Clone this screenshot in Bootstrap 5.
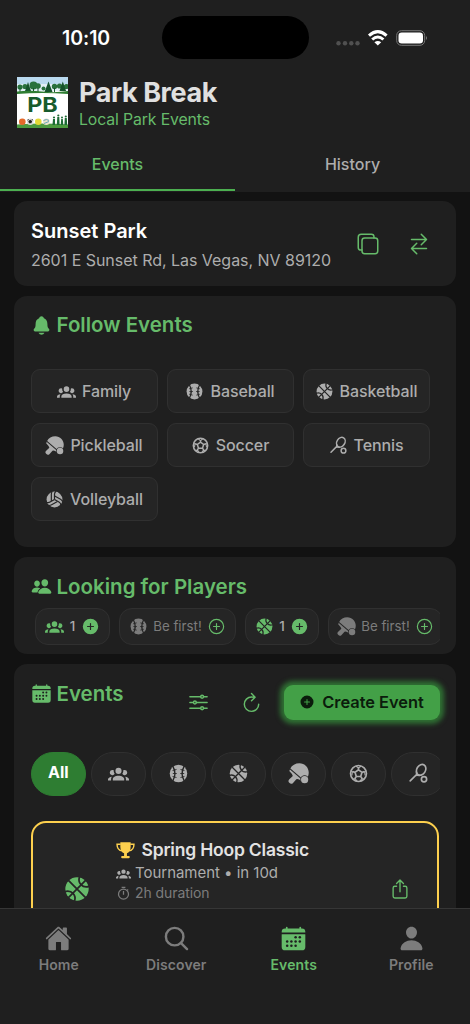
<!DOCTYPE html>
<html lang="en" data-bs-theme="dark">
<head>
<meta charset="utf-8">
<meta name="viewport" content="width=device-width, initial-scale=1">
<title>Park Break</title>
<link href="https://cdn.jsdelivr.net/npm/bootstrap@5.3.0/dist/css/bootstrap.min.css" rel="stylesheet">
<style>
:root{--surface:#1f1f1f;--chip:#252525;--line:#303030;--green:#66bb6a;--muted:#adadad;--dim:#7c7c7c}
body{background:#121212;font-family:Inter,"Liberation Sans",sans-serif;color:#e2e2e2;height:1024px;overflow:hidden;line-height:1}
svg{display:block;flex:none;fill:currentColor}
.ln{fill:none;stroke:currentColor;stroke-width:32;stroke-linecap:round;stroke-linejoin:round}
.phone{height:1024px}
.tone-green{color:var(--green)}
.tone-muted{color:var(--muted)}
.tone-dim{color:var(--dim)}
.top-area{background:var(--surface);height:192px}
.status-row{height:77px;padding:16px 42px 0 62px}
.clock{font-size:19.5px;font-weight:600;color:#fff;width:99.5px;line-height:44px;letter-spacing:-.05px}
.island{width:147px;height:43px;border-radius:22px;background:#000}
.brand-row{height:52px;padding-left:17px;gap:11px}
.brand-name{font-size:27px;font-weight:700;line-height:31px;letter-spacing:-.43px;color:#e0e0e0;margin:0}
.brand-sub{font-size:15.8px;line-height:20px;margin-top:2px;letter-spacing:-.12px}
.tab-row .nav-link{height:62px;border-radius:0;color:var(--muted);font-size:16px;font-weight:500;padding:26px 0 0;line-height:18px;border-bottom:2.5px solid transparent}
.tab-row .nav-link.active{color:var(--green);background:none;border-bottom-color:#4caf50}
.scroller{padding:9px 14px 0;gap:10px}
.panel{background:var(--surface);border-radius:13px;padding:0 16.5px}
.place{height:85px;padding-right:25.5px;padding-left:17px}
.place-name{font-size:20px;font-weight:600;line-height:24px;margin:1px 0 0}
.place-addr{font-size:16px;line-height:20px;margin-top:7px;white-space:nowrap;letter-spacing:-.03px}
.sec-title{font-size:20.5px;font-weight:600;line-height:24px;color:var(--green);gap:5px;margin:0}
.follow{height:251px;padding-top:17px}
.follow-grid{display:grid;grid-template-columns:repeat(3,127px);gap:10px 9px;margin-top:32px}
.pick{height:44px;background:var(--chip);border:1px solid var(--line);border-radius:9px;color:var(--muted);font-size:16px;font-weight:500;gap:6px;letter-spacing:-.1px;padding:0;line-height:20px}
.looking{height:97px;padding-top:17.5px}
.clip{overflow:hidden;width:409.5px}
.seek{height:37px;flex:none;border:1px solid var(--line);background:var(--chip);border-radius:13px;font-size:13.3px;gap:5.5px}
.events-panel{height:280px;padding-top:17.5px}
.new-btn{background:#43a047;color:#0b1c0c;font-weight:600;font-size:16.4px;border:0;border-radius:9px;width:156px;height:35px;padding:0;gap:7px;box-shadow:0 0 5px 4px #2f7033;margin-left:-9px}
.filter{width:55.5px;height:44px;flex:none;border-radius:22px;background:var(--chip);border:1px solid var(--line);color:var(--muted);padding-bottom:2px}
.filter.on{background:#2e7d32;border-color:#2e7d32;color:#fff;font-size:16px;font-weight:700;padding-bottom:4px}
.ev-card{width:408px;height:120px;border:2px solid #fdd04e;border-radius:15px;background:var(--chip);padding:16px 26px 0 29.5px;margin-left:.5px}
.ev-main{margin-left:25px}
.ev-name{font-size:17.5px;font-weight:600;line-height:22px;gap:7px;letter-spacing:-.2px}
.ev-meta{font-size:15px;line-height:20px;gap:4.5px;margin-top:2px;letter-spacing:-.03px}
.ev-time{font-size:14px;line-height:18px;gap:4.5px;margin-top:1px;letter-spacing:-.08px}
.bottom-bar{background:var(--surface);border-top:1px solid #363636;height:116px;z-index:2;padding-top:16px}
.bottom-bar a{color:var(--dim);text-decoration:none;font-size:14px;font-weight:600;gap:3.5px;line-height:18px;width:25%;letter-spacing:.1px}
.bottom-bar a.current{color:var(--green)}
</style>
</head>
<body>
<svg width="0" height="0" class="position-absolute">
<defs>
<mask id="m-base"><circle cx="12" cy="12" r="10" fill="#fff"/><g fill="none" stroke="#000" stroke-width="1.6"><path d="M5.500 3.500Q10.200 12 5.500 20.500M18.500 3.500Q13.800 12 18.500 20.500"/><path d="M5.200 8.600l4.500-1.200M5.500 12h4.500M5.200 15.400l4.500 1.200M18.800 8.600l-4.500-1.200M18.500 12h-4.500M18.800 15.400l-4.500 1.200" stroke-width="1"/></g></mask>
<mask id="m-bask"><circle cx="12" cy="12" r="10" fill="#fff"/><g fill="none" stroke="#000" stroke-width="1.5"><path d="M4 4l16 16M20 4L4 20M14.2 1.5C12.3 6.5 16.5 11.7 22.5 9.8M9.8 22.500C11.700 17.500 7.500 12.300 1.500 14.200"/></g></mask>
<mask id="m-volley"><circle cx="12" cy="12" r="10" fill="#fff"/><g fill="none" stroke="#000" stroke-width="1.5"><path d="M12 12V5.500Q12 3 14 1.500M8 14V5.500Q8 4 9 2"/><path d="M12 12V5.500Q12 3 14 1.500M8 14V5.500Q8 4 9 2" transform="rotate(120 12 12)"/><path d="M12 12V5.500Q12 3 14 1.500M8 14V5.500Q8 4 9 2" transform="rotate(240 12 12)"/></g></mask>
<mask id="m-pad"><path d="M0 0h24v24H0z" fill="#fff"/><path d="M2 6.500L16 18.500" stroke="#000" stroke-width="1.300"/><circle cx="19" cy="19" r="4.900" fill="#000"/></mask>
<mask id="m-cal"><path fill="#fff" d="M0 0h512v512H0z"/><g fill="#000"><circle cx="296" cy="232" r="24"/><circle cx="376" cy="232" r="24"/><circle cx="136" cy="312" r="24"/><circle cx="216" cy="312" r="24"/><circle cx="296" cy="312" r="24"/><circle cx="376" cy="312" r="24"/><circle cx="136" cy="392" r="24"/><circle cx="216" cy="392" r="24"/><circle cx="296" cy="392" r="24"/></g></mask>
</defs>
<symbol id="family" viewBox="0 0 24 24"><path d="M12 5.500A3.500 3.500 0 1 1 12 12.500A3.500 3.500 0 1 1 12 5.500M5 8C5.560 8 6.080 8.150 6.530 8.420C6.380 9.850 6.800 11.270 7.660 12.380A3 3 0 1 1 5 8M19 8A3 3 0 1 1 16.340 12.380C17.200 11.270 17.620 9.850 17.470 8.420C17.920 8.150 18.440 8 19 8M5.500 18.250C5.500 16.180 8.410 14.500 12 14.500S18.500 16.180 18.500 18.250V20H5.500zM0 20V18.500C0 17.110 1.890 15.940 4.450 15.600C3.860 16.280 3.500 17.220 3.500 18.250V20zM24 20H20.500V18.250C20.500 17.220 20.140 16.280 19.550 15.600C22.110 15.940 24 17.110 24 18.500z"/></symbol>
<symbol id="baseball" viewBox="0 0 24 24"><path mask="url(#m-base)" d="M0 0h24v24H0z"/></symbol>
<symbol id="basketball" viewBox="0 0 24 24"><path mask="url(#m-bask)" d="M0 0h24v24H0z"/></symbol>
<symbol id="volleyball" viewBox="0 0 24 24"><path mask="url(#m-volley)" d="M0 0h24v24H0z"/></symbol>
<symbol id="pickleball" viewBox="0 0 24 24"><g mask="url(#m-pad)"><path d="M2.500 6.500C4.500 2.500 8.500 .3 13 .3C19 .3 23.700 5 23.700 11C23.700 14.500 22 18 19.500 20L15 20.500Q12.500 18 9.500 18.500L5.500 23Q3.500 24.500 1.500 22.500T1.500 18.500L5.500 14.800L4.500 12.500L1.500 9z"/></g><circle cx="19" cy="19" r="4.100"/></symbol>
<symbol id="soccer" viewBox="0 0 24 24"><g fill="none" stroke="currentColor" stroke-width="1.900"><circle cx="12" cy="12" r="9.100"/><path d="M12 7.800l4 2.900-1.500 4.700h-5L8 10.700zM12 7.800V5.500M16 10.700l3-1M14.500 15.400l1.800 2.500M9.500 15.400l-1.800 2.500M8 10.700l-3-1"/><path d="M9 3.500l3 2.300 3-2.300M20.800 9l-1.800 1 .6 4.200M18 18.200l-2.500-.2-1.600 2.800M10.100 20.800L8.500 18 6 18.200M4.400 14.200L5 10l-1.800-1" stroke-width="1.300"/></g></symbol>
<symbol id="tennis" viewBox="0 0 24 24"><g fill="none" stroke="currentColor" stroke-width="1.900" stroke-linecap="round"><ellipse cx="15" cy="7.800" rx="5" ry="6.500" transform="rotate(32 15 7.800)"/><path d="M2.500 20.500L8.500 14.500Q10.300 13.800 9.800 10.500M8.500 14.500Q10 13.300 13 14.200"/><circle cx="18.300" cy="18.500" r="3"/></g></symbol>
<symbol id="calendar" viewBox="0 0 512 512"><path mask="url(#m-cal)" d="M480 128a64 64 0 00-64-64h-16V48a16 16 0 00-32 0v16H144V48a16 16 0 00-32 0v16H96a64 64 0 00-64 64v12a4 4 0 004 4h440a4 4 0 004-4zM32 416a64 64 0 0064 64h320a64 64 0 0064-64V179a3 3 0 00-3-3H35a3 3 0 00-3 3z"/></symbol>
<symbol id="bell" viewBox="0 0 512 512"><path d="M440 341.300l-4.900-5.900c-22-26.600-35.300-42.700-35.300-118 0-39-9.300-71-27.700-95-13.600-17.700-31.900-31.200-56-41.100C306.600 51.500 282.800 32 256 32s-50.600 19.500-59.300 48.600c-56.400 23.200-84.600 68.400-84.600 136.800 0 75.300-13.300 91.400-35.300 118l-4.900 5.900a35.200 35.200 0 00-4.600 37.600c6.200 13 19.300 21.100 34.300 21.100h308.900c14.900 0 28-8 34.200-21a35.200 35.200 0 00-4.600-37.700zM256 480a80 80 0 0070.400-42.100 4 4 0 00-3.500-5.900H189a4 4 0 00-3.500 5.900A80 80 0 00256 480z"/></symbol>
<symbol id="people" viewBox="0 0 512 512"><path d="M336 256c-20.600 0-40.400-9.200-56-25.800-15.100-16.300-24.400-38-26-61-1.700-24.700 5.800-47.300 21.100-63.800S312 80 336 80c23.800 0 45.400 9.100 60.700 25.500 15.500 16.600 23 39.200 21.300 63.600-1.700 23.100-10.900 44.800-26 61C376.400 246.800 356.600 256 336 256zM467.800 432H204.200a27.700 27.700 0 01-22-10.700 30.200 30.200 0 01-5.300-25.800c8.400-33.800 29.300-61.800 60.300-81C264.800 297.400 299.900 288 336 288c36.900 0 71 9 98.700 26 31.100 19.200 52 47.400 60.400 81.600a30.300 30.300 0 01-5.300 25.800 27.700 27.700 0 01-22 10.600zM147 260c-35.200 0-66.100-32.700-69-72.900-1.400-20.600 5-39.700 18-53.600 12.900-13.900 31-21.500 51-21.500s38 7.700 50.900 21.600c13.100 14 19.500 33 18 53.500-2.900 40.200-33.800 72.900-68.900 72.900zM212.700 291.500c-17.600-8.600-40.500-13-65.700-13-29.500 0-58 7.700-80.600 21.700-25.500 15.800-42.600 38.900-49.600 66.700a27.400 27.400 0 004.800 23.400A25.300 25.300 0 0041.700 400h111a8 8 0 007.900-6.600c8-35.900 28.700-64.700 58.100-85.700a8 8 0 00-.6-13.400z"/></symbol>
<symbol id="plus-full" viewBox="0 0 512 512"><path fill-rule="evenodd" d="M256 48a208 208 0 100 416 208 208 0 000-416zm80 224h-64v64a16 16 0 01-32 0v-64h-64a16 16 0 010-32h64v-64a16 16 0 0132 0v64h64a16 16 0 010 32z"/></symbol>
<symbol id="plus-ring" viewBox="0 0 512 512"><path class="ln" d="M448 256a192 192 0 10-384 0 192 192 0 10384 0zM256 176v160M336 256H176"/></symbol>
</svg>

<div class="phone d-flex flex-column">
<header class="top-area flex-shrink-0">
  <div class="status-row d-flex">
    <div class="clock">10:10</div>
    <div class="island"></div>
    <svg class="ms-auto" width="92" height="44" viewBox="0 0 92 44"><g fill="#505050"><circle cx="2.500" cy="27.300" r="2.200"/><circle cx="9" cy="27.300" r="2.200"/><circle cx="15.300" cy="27.300" r="2.200"/><circle cx="21.500" cy="27.300" r="2.200"/></g><g fill="none" stroke="#fff" stroke-width="3"><path d="M33 19.600Q41.800 11.700 50.600 19.600M36.200 23.500Q41.800 18.500 47.400 23.500"/></g><path fill="#fff" d="M38.400 26.200Q41.800 23.600 45.200 26.200L41.800 29.500z"/><rect x="60.700" y="14.700" width="28" height="14.600" rx="4.700" fill="none" stroke="#777"/><rect x="62.500" y="16.500" width="24.500" height="11" rx="3.200" fill="#fff"/><path fill="#777" d="M90 20q2 2 0 4z"/></svg>
  </div>
  <div class="brand-row d-flex">
    <svg width="51" height="51" viewBox="0 0 51 51">
      <path fill="#fff" d="M0 0h51v51H0z"/><path fill="#b9d9ef" d="M0 0h51v14H0z"/><path fill="#e3f0f7" d="M0 7h51v7H0z"/>
      <g fill="#28713d"><circle cx="3" cy="10" r="2.600"/><circle cx="8" cy="9.500" r="2.600"/><circle cx="16.500" cy="8.500" r="4"/><circle cx="21" cy="9" r="2.800"/><circle cx="26.500" cy="11.500" r="2"/><circle cx="37.500" cy="9.500" r="2.700"/><circle cx="42.500" cy="9" r="2.600"/><circle cx="49.300" cy="9.500" r="2.600"/></g>
      <g fill="#15532c"><path d="M11 5l3 9H8zM31.500 4.500l4 10.500h-8zM45.800 4.500l3.300 9.500h-6.600z"/><path d="M2.500 11h1v4h-1zM16 11h1v4h-1zM20.500 11h1v4h-1zM37 11h1v4h-1z"/></g>
      <path fill="#2e7d32" d="M0 14.500Q12 13 25 14.500T51 14V17H0z"/>
      <path fill="#fff" d="M0 17Q25 15 51 17v2H0z"/>
      <text x="25.500" y="35.200" text-anchor="middle" font-family="Inter,sans-serif" font-size="20.500" font-weight="700" fill="#175b2c" textLength="30.500" lengthAdjust="spacingAndGlyphs">PB</text>
      <path fill="#4c9a3f" d="M0 47.500Q25 45.500 51 47.500V51H0z"/>
      <circle cx="5.300" cy="44.700" r="3.300" fill="#e4692a"/><circle cx="13.200" cy="44.700" r="3.300" fill="#ddd"/><path fill="#222" d="M13.200 42.700l1.900 1.400-.7 2.200H12l-.7-2.200zM10 44l1-2 1 .3zM16.400 44l-1-2-1 .3z"/><circle cx="21.300" cy="44.700" r="3.300" fill="#e3d936"/><circle cx="29.300" cy="44.700" r="3.300" fill="#e9e4c8"/><path d="M26.500 43.500q3-2 5.600 0M27 46.500l5-2" stroke="#6ca7b8" fill="none"/>
      <g fill="#1d6b35"><path d="M36 42h2v6h-2.500zM40.300 40h2l.3 8h-2.800zM44.200 42h1.600l.5 6h-2.600zM47.800 41h2l.4 7h-2.800z"/><circle cx="37" cy="40.500" r="1.100"/><circle cx="41.300" cy="38.500" r="1.100"/><circle cx="45" cy="40.500" r="1"/><circle cx="48.800" cy="39.500" r="1.100"/></g>
    </svg>
    <div><h1 class="brand-name">Park Break</h1><div class="brand-sub tone-green">Local Park Events</div></div>
  </div>
  <ul class="tab-row nav nav-justified">
    <li class="nav-item"><a class="nav-link active" href="#">Events</a></li>
    <li class="nav-item"><a class="nav-link" href="#">History</a></li>
  </ul>
</header>

<main class="scroller d-flex flex-column flex-grow-1 overflow-hidden">
  <section class="panel place d-flex align-items-center flex-shrink-0">
    <div><h2 class="place-name">Sunset Park</h2><div class="place-addr tone-muted">2601 E Sunset Rd, Las Vegas, NV 89120</div></div>
    <div class="ms-auto d-flex tone-green" style="gap:27px">
      <svg width="24" height="24" viewBox="0 0 512 512"><g class="ln"><rect x="128" y="128" width="336" height="336" rx="57"/><path d="M383.500 128l.5-24a56 56 0 00-56-56H112a64 64 0 00-64 64v216a56 56 0 0056 56h24"/></g></svg>
      <svg width="24" height="24" viewBox="0 0 512 512"><path class="ln" d="M304 48l112 112-112 112M398.900 160H96M208 464L96 352l112-112M114 352h302"/></svg>
    </div>
  </section>

  <section class="panel follow flex-shrink-0">
    <h2 class="sec-title d-flex align-items-center"><svg width="21" height="21"><use href="#bell"/></svg>Follow Events</h2>
    <div class="follow-grid">
      <button class="pick btn d-flex align-items-center justify-content-center"><svg width="19" height="19"><use href="#family"/></svg>Family</button>
      <button class="pick btn d-flex align-items-center justify-content-center"><svg width="19" height="19"><use href="#baseball"/></svg>Baseball</button>
      <button class="pick btn d-flex align-items-center justify-content-center"><svg width="19" height="19"><use href="#basketball"/></svg>Basketball</button>
      <button class="pick btn d-flex align-items-center justify-content-center"><svg width="19" height="19"><use href="#pickleball"/></svg>Pickleball</button>
      <button class="pick btn d-flex align-items-center justify-content-center"><svg width="19" height="19"><use href="#soccer"/></svg>Soccer</button>
      <button class="pick btn d-flex align-items-center justify-content-center"><svg width="19" height="19"><use href="#tennis"/></svg>Tennis</button>
      <button class="pick btn d-flex align-items-center justify-content-center"><svg width="19" height="19"><use href="#volleyball"/></svg>Volleyball</button>
    </div>
  </section>

  <section class="panel looking flex-shrink-0">
    <h2 class="sec-title d-flex align-items-center"><svg width="21" height="21"><use href="#people"/></svg>Looking for Players</h2>
    <div class="clip d-flex" style="gap:9px;padding:9.5px 0 0 4.5px">
      <div class="seek d-flex align-items-center justify-content-center tone-green" style="width:75px"><svg width="19" height="19"><use href="#family"/></svg><span class="tone-muted fw-medium">1</span><svg width="19" height="19"><use href="#plus-full"/></svg></div>
      <div class="seek d-flex align-items-center justify-content-center tone-dim" style="width:117px"><svg width="19" height="19"><use href="#baseball"/></svg><span>Be first!</span><svg class="tone-green" width="19" height="19"><use href="#plus-ring"/></svg></div>
      <div class="seek d-flex align-items-center justify-content-center tone-green" style="width:74px"><svg width="19" height="19"><use href="#basketball"/></svg><span class="tone-muted fw-medium">1</span><svg width="19" height="19"><use href="#plus-full"/></svg></div>
      <div class="seek d-flex align-items-center justify-content-center tone-dim" style="width:115px"><svg width="19" height="19"><use href="#pickleball"/></svg><span>Be first!</span><svg class="tone-green" width="19" height="19"><use href="#plus-ring"/></svg></div>
    </div>
  </section>

  <section class="panel events-panel flex-shrink-0">
    <div class="d-flex tone-green">
      <h2 class="sec-title d-flex align-items-center align-self-start"><svg width="21" height="21"><use href="#calendar"/></svg>Events</h2>
      <div class="ms-auto d-flex align-items-center" style="gap:30px;margin-top:3px">
        <svg width="23" height="23" viewBox="0 0 512 512"><g class="ln"><path d="M368 128h80M64 128h240M368 384h80M64 384h240M208 256h240M64 256h80"/><circle cx="336" cy="128" r="32"/><circle cx="176" cy="256" r="32"/><circle cx="336" cy="384" r="32"/></g></svg>
        <svg width="23" height="23" viewBox="0 0 512 512"><path class="ln" d="M320 146s24.400-12-64-12a160 160 0 10160 160M256 58l80 80-80 80"/></svg>
        <button class="new-btn btn d-flex align-items-center justify-content-center"><svg width="16" height="16"><use href="#plus-full"/></svg>Create Event</button>
      </div>
    </div>
    <div class="clip d-flex" style="gap:4.500px;margin-top:32.500px">
      <div class="filter on d-flex align-items-center justify-content-center">All</div>
      <div class="filter d-flex align-items-center justify-content-center"><svg width="21" height="21"><use href="#family"/></svg></div>
      <div class="filter d-flex align-items-center justify-content-center"><svg width="21" height="21"><use href="#baseball"/></svg></div>
      <div class="filter d-flex align-items-center justify-content-center"><svg width="21" height="21"><use href="#basketball"/></svg></div>
      <div class="filter d-flex align-items-center justify-content-center"><svg width="21" height="21"><use href="#pickleball"/></svg></div>
      <div class="filter d-flex align-items-center justify-content-center"><svg width="21" height="21"><use href="#soccer"/></svg></div>
      <div class="filter d-flex align-items-center justify-content-center"><svg width="21" height="21"><use href="#tennis"/></svg></div>
    </div>
    <article class="ev-card d-flex" style="margin-top:25px">
      <svg class="tone-green" width="28" height="28" style="margin-top:36px"><use href="#basketball"/></svg>
      <div class="ev-main">
        <div class="ev-name d-flex align-items-center"><svg width="19" height="19" viewBox="0 0 24 24" style="color:#fdd04e"><path d="M5.500 1.500h13v6c0 4-2 7-4.700 8v3.500H16q1.500 0 1.500 1.300T16 21.800H8q-1.500 0-1.500-1.500T8 19h2.200v-3.500c-2.700-1-4.700-4-4.700-8z"/><path d="M6 4H1.300Q1.300 11.500 8 12.500M18 4h4.700Q22.700 11.500 16 12.500" fill="none" stroke="currentColor" stroke-width="1.800"/></svg>Spring Hoop Classic</div>
        <div class="ev-meta tone-muted d-flex align-items-center"><svg width="15" height="15"><use href="#family"/></svg>Tournament • in 10d</div>
        <div class="ev-time tone-dim d-flex align-items-center"><svg width="15" height="15" viewBox="0 0 24 24"><g fill="none" stroke="currentColor" stroke-width="2"><circle cx="12" cy="13" r="8"/><path d="M9 2h6M12 8v6M18 7l1.500-1.500"/></g></svg>2h duration</div>
      </div>
      <svg class="ms-auto tone-green" width="22" height="22" viewBox="0 0 512 512" style="margin-top:38.500px"><path class="ln" d="M336 192h40a40 40 0 0140 40v192a40 40 0 01-40 40H136a40 40 0 01-40-40V232a40 40 0 0140-40h40M336 128l-80-80-80 80M256 321V48"/></svg>
    </article>
  </section>
</main>

<nav class="bottom-bar d-flex flex-shrink-0 align-items-start">
  <a class="d-flex flex-column align-items-center" href="#"><svg width="27" height="27" viewBox="0 0 512 512"><path d="M261.600 101.300a8 8 0 00-11.100 0L66.400 277.100a8 8 0 00-2.500 5.800V448a32 32 0 0032 32H192a16 16 0 0016-16V328a8 8 0 018-8h80a8 8 0 018 8v136a16 16 0 0016 16h96a32 32 0 0032-32V283a8 8 0 00-2.500-5.800z"/><path d="M490.900 244.200l-74.800-71.600V64a16 16 0 00-16-16h-48a16 16 0 00-16 16v32l-58-55.400C272.800 35.100 264.700 32 256 32s-16.700 3.100-22.100 8.600L21.200 244.100c-6.200 6-7 15.900-1.400 22.400a16 16 0 0023.200 1.100L250.500 69.300a8 8 0 0111.100 0l207.500 198.300a16 16 0 0022.600-.5c6.100-6.300 5.600-16.800-.8-22.900z"/></svg>Home</a>
  <a class="d-flex flex-column align-items-center" href="#"><svg width="27" height="27" viewBox="0 0 512 512"><g class="ln" style="stroke-width:46"><circle cx="221" cy="221" r="166"/><path d="M342 342l114 114"/></g></svg>Discover</a>
  <a class="current d-flex flex-column align-items-center" href="#"><svg width="27" height="27"><use href="#calendar"/></svg>Events</a>
  <a class="d-flex flex-column align-items-center" href="#"><svg width="27" height="27" viewBox="0 0 512 512"><path d="M332.600 64.600C313.200 43.600 286 32 256 32c-30.200 0-57.400 11.500-76.800 32.400-19.600 21-29.100 49.800-26.900 80.800C156.800 206.300 203.300 256 256 256s99.200-49.700 103.700-110.800c2.300-30.700-7.300-59.300-27.100-80.600zM432 480H80a31 31 0 01-24.200-11.100c-6.500-7.800-9.100-18.400-7.200-29.100C57.100 393 83.400 353.600 124.800 326c36.800-24.500 83.400-38 131.200-38s94.400 13.500 131.200 38c41.400 27.600 67.700 67 76.200 113.800 1.900 10.700-.7 21.300-7.200 29.100A31 31 0 01432 480z"/></svg>Profile</a>
</nav>
</div>
<script src="https://cdn.jsdelivr.net/npm/bootstrap@5.3.0/dist/js/bootstrap.bundle.min.js"></script>
</body>
</html>
